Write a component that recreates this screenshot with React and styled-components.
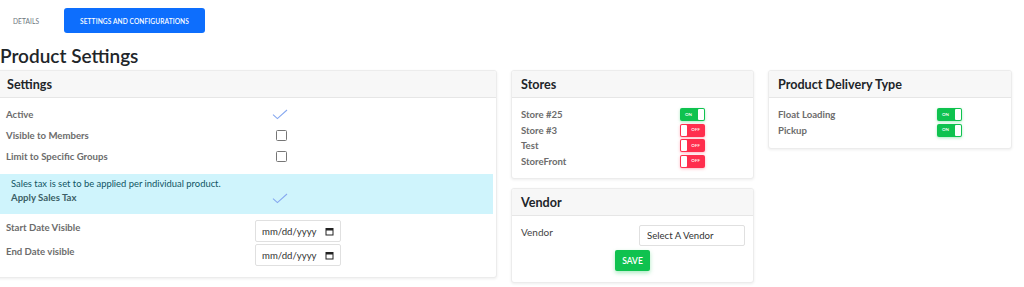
import React from "react";
import styled, { createGlobalStyle } from "styled-components";

const Global = createGlobalStyle`
  html, body { margin: 0; padding: 0; background: #fff; }
  body { font-family: "Lato", "Open Sans", sans-serif; color: #212529; overflow: hidden; }
  * { box-sizing: border-box; }
`;

const Page = styled.div`
  width: 1024px;
  height: 287px;
  overflow: hidden;
`;

const Tabs = styled.div`
  display: flex;
  align-items: center;
  height: 33px;
  padding-top: 8px;
`;

const Tab = styled.button`
  border: none;
  font-family: inherit;
  font-size: 6.6px;
  white-space: nowrap;
  text-transform: uppercase;
  letter-spacing: 0.1px;
  height: 25px;
  border-radius: 3px;
  cursor: pointer;
  padding: ${(p) => (p.$active ? "0" : "0 0 0 13px")};
  width: ${(p) => (p.$active ? "141px" : "64px")};
  background: ${(p) => (p.$active ? "#0d6efd" : "transparent")};
  color: ${(p) => (p.$active ? "#fff" : "#6c757d")};
  font-weight: ${(p) => (p.$active ? 600 : 400)};
  text-align: ${(p) => (p.$active ? "center" : "left")};
`;

const Heading = styled.h3`
  margin: 10px 0 0 0;
  font-size: 19px;
  font-weight: 600;
  line-height: 26px;
  color: #212529;
`;

const Grid = styled.div`
  display: flex;
  gap: 14px;
  margin-left: -3px;
  margin-top: 1px;
  width: 1015px;
  align-items: flex-start;
`;

const Column = styled.div`
  width: ${(p) => p.$w}px;
  display: flex;
  flex-direction: column;
  gap: 9px;
`;

const Card = styled.div`
  background: #fff;
  border: 1px solid #ececec;
  border-radius: 3px;
  box-shadow: 0 1px 3px rgba(0, 0, 0, 0.07);
  overflow: hidden;
`;

const CardHeader = styled.div`
  height: 27px;
  background: #f7f7f7;
  border-bottom: 1px solid #e6e6e6;
  padding: 0 9px;
  display: flex;
  align-items: center;
  font-size: 12.6px;
  font-weight: 700;
  color: #212529;
`;

const CardBody = styled.div`
  padding: ${(p) => p.$pad || "6px 0 10px 0"};
`;

const Row = styled.div`
  display: grid;
  grid-template-columns: ${(p) => p.$cols};
  align-items: ${(p) => p.$align || "center"};
  min-height: ${(p) => p.$h || 21}px;
  padding-left: ${(p) => p.$pl || 8}px;
`;

const Control = styled.div`
  display: flex;
  align-items: center;
  line-height: 0;
`;

const Label = styled.div`
  font-size: 9.6px;
  font-weight: 700;
  color: #6c6c6c;
  line-height: ${(p) => p.$lh || "15px"};
`;

const PlainLabel = styled.div`
  font-size: 10px;
  color: #444;
  line-height: 15px;
`;

const CheckBox = styled.span`
  display: inline-block;
  width: 11px;
  height: 11px;
  border: 1px solid #767676;
  border-radius: 1.5px;
  margin-left: 13px;
  background: #fff;
`;

const CheckWrap = styled.span`
  display: inline-flex;
  margin-left: 9px;
`;

const Check = () => (
  <CheckWrap>
    <svg width="16" height="11" viewBox="0 0 16 11">
      <path d="M1 5.6 L5.4 9.6 L15 1" fill="none" stroke="#86a8f0" strokeWidth="1.1" />
    </svg>
  </CheckWrap>
);

const InfoBox = styled.div`
  background: #cff4fc;
  margin: 7px 3px 0 0;
  padding: 3px 0 9px 0;
`;

const InfoText = styled.div`
  font-size: 9.4px;
  color: #0f5563;
  line-height: 14px;
  padding-left: 13px;
`;

const InfoLabel = styled(Label)`
  color: #3c5f66;
  line-height: 14px;
`;

const DateInput = styled.div`
  width: 86px;
  height: 22px;
  border: 1px solid #e0e0e0;
  border-radius: 2px;
  display: flex;
  align-items: center;
  justify-content: space-between;
  padding: 0 6px 0 6px;
  font-size: 9.6px;
  color: #333;
  background: #fff;
`;

const DateRows = styled.div`
  margin-top: 6px;
  display: flex;
  flex-direction: column;
  gap: 2px;
`;

const CalIcon = () => (
  <svg width="9" height="9" viewBox="0 0 9 9">
    <rect x="1" y="1.5" width="7" height="6.5" fill="none" stroke="#222" strokeWidth="1" />
    <rect x="1" y="1.5" width="7" height="2" fill="#222" />
  </svg>
);

const Toggle = styled.span`
  position: relative;
  display: inline-block;
  width: 25px;
  height: 13px;
  border-radius: 2px;
  background: ${(p) => (p.$on ? "#0fc24f" : "#ff2e4d")};
  box-shadow: 0 1px 3px ${(p) => (p.$on ? "rgba(15,194,79,0.35)" : "rgba(255,46,77,0.35)")};
`;

const ToggleText = styled.span`
  position: absolute;
  top: 0;
  bottom: 0;
  ${(p) => (p.$on ? "left: 5px;" : "right: 5px;")}
  display: flex;
  align-items: center;
  font-size: 4.5px;
  line-height: 1;
  color: #fff;
  font-weight: 600;
`;

const Knob = styled.span`
  position: absolute;
  top: 1px;
  bottom: 1px;
  width: 6px;
  border-radius: 1px;
  background: #fff;
  ${(p) => (p.$on ? "right: 1px;" : "left: 1px;")}
`;

const Switch = ({ on }) => (
  <Toggle $on={on}>
    <ToggleText $on={on}>{on ? "ON" : "OFF"}</ToggleText>
    <Knob $on={on} />
  </Toggle>
);

const Select = styled.div`
  width: 106px;
  height: 21px;
  border: 1px solid #e0e0e0;
  border-radius: 2px;
  display: flex;
  align-items: center;
  padding-left: 7px;
  font-size: 9.6px;
  color: #333;
`;

const SaveRow = styled.div`
  display: flex;
  justify-content: center;
  margin-top: 4px;
`;

const SaveButton = styled.button`
  width: 35px;
  height: 21px;
  border: none;
  border-radius: 2px;
  background: #0fc24f;
  color: #fff;
  font-family: inherit;
  font-size: 8.5px;
  font-weight: 600;
  padding: 0;
  box-shadow: 0 2px 4px rgba(15, 194, 79, 0.35);
`;

const stores = [
  ["Store #25", true],
  ["Store #3", false],
  ["Test", false],
  ["StoreFront", false],
];

const delivery = [
  ["Float Loading", true],
  ["Pickup", true],
];

export default function App() {
  return (
    <Page>
      <Global />
      <Tabs>
        <Tab>Details</Tab>
        <Tab $active>Settings and Configurations</Tab>
      </Tabs>
      <Heading>Product Settings</Heading>
      <Grid>
        <Column $w={500}>
          <Card>
            <CardHeader>Settings</CardHeader>
            <CardBody $pad="6px 0 11px 0">
              <Row $cols="257px 1fr">
                <Label>Active</Label>
                <Control><Check /></Control>
              </Row>
              <Row $cols="257px 1fr">
                <Label>Visible to Members</Label>
                <Control><CheckBox /></Control>
              </Row>
              <Row $cols="257px 1fr">
                <Label>Limit to Specific Groups</Label>
                <Control><CheckBox /></Control>
              </Row>
              <InfoBox>
                <InfoText>Sales tax is set to be applied per individual product.</InfoText>
                <Row $cols="252px 1fr" $h={14} $pl={13}>
                  <InfoLabel>Apply Sales Tax</InfoLabel>
                  <Control><Check /></Control>
                </Row>
              </InfoBox>
              <DateRows>
                <Row $cols="249px 1fr" $align="start" $h={22}>
                  <Label $lh="16px">Start Date Visible</Label>
                  <DateInput>mm/dd/yyyy<CalIcon /></DateInput>
                </Row>
                <Row $cols="249px 1fr" $align="start" $h={22}>
                  <Label $lh="16px">End Date visible</Label>
                  <DateInput>mm/dd/yyyy<CalIcon /></DateInput>
                </Row>
              </DateRows>
            </CardBody>
          </Card>
        </Column>
        <Column $w={243}>
          <Card>
            <CardHeader>Stores</CardHeader>
            <CardBody $pad="9px 0 9px 0">
              {stores.map(([name, on]) => (
                <Row key={name} $cols="159px 1fr" $h={15.5} $pl={9}>
                  <Label>{name}</Label>
                  <Control><Switch on={on} /></Control>
                </Row>
              ))}
            </CardBody>
          </Card>
          <Card>
            <CardHeader>Vendor</CardHeader>
            <CardBody $pad="9px 0 11px 0">
              <Row $cols="118px 1fr" $align="start" $h={21} $pl={9}>
                <PlainLabel>Vendor</PlainLabel>
                <Select>Select A Vendor</Select>
              </Row>
              <SaveRow>
                <SaveButton>SAVE</SaveButton>
              </SaveRow>
            </CardBody>
          </Card>
        </Column>
        <Column $w={244}>
          <Card>
            <CardHeader>Product Delivery Type</CardHeader>
            <CardBody $pad="9px 0 10px 0">
              {delivery.map(([name, on]) => (
                <Row key={name} $cols="159px 1fr" $h={15.5} $pl={9}>
                  <Label>{name}</Label>
                  <Control><Switch on={on} /></Control>
                </Row>
              ))}
            </CardBody>
          </Card>
        </Column>
      </Grid>
    </Page>
  );
}
